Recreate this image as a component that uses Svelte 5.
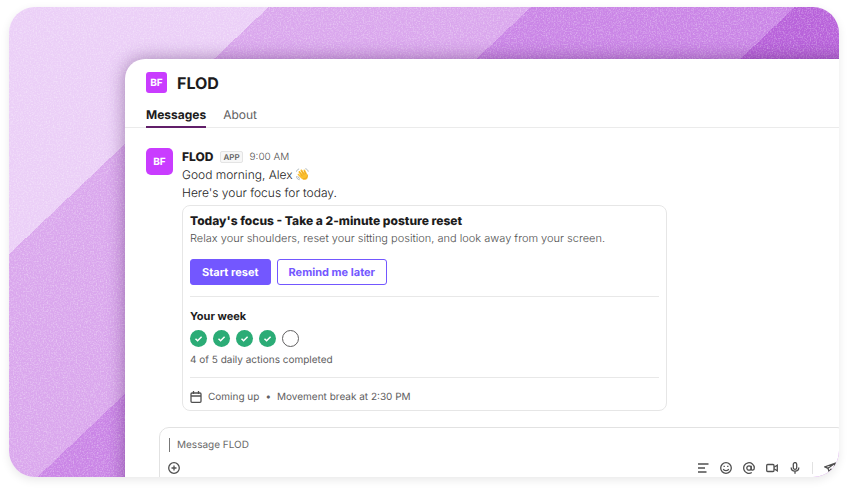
<script>
	let tab = $state('Messages');
	let message = $state('');

	const tabs = ['Messages', 'About'];
	const week = [true, true, true, true, false];
	const completed = week.filter(Boolean).length;
</script>

<div class="stage">
	<div class="frame">
		<svg class="grain" aria-hidden="true">
			<filter id="grain" x="0" y="0" width="100%" height="100%">
				<feTurbulence type="fractalNoise" baseFrequency="0.7" numOctaves="2" seed="4" />
				<feColorMatrix values="0 0 0 0 1  0 0 0 0 1  0 0 0 0 1  0.8 0 0 0 -0.34" />
			</filter>
			<rect width="100%" height="100%" filter="url(#grain)" />
		</svg>

		<main class="window">
			<header class="title">
				<span class="logo">BF</span>
				<h1>FLOD</h1>
			</header>

			<nav class="tabs">
				{#each tabs as name}
					<button class:active={tab === name} onclick={() => (tab = name)}>{name}</button>
				{/each}
			</nav>

			<article class="message">
				<span class="logo large">BF</span>
				<div class="body">
					<div class="meta">
						<strong>FLOD</strong>
						<span class="badge">APP</span>
						<time>9:00 AM</time>
					</div>
					<p>
						Good morning, Alex
						<svg class="wave" viewBox="0 0 24 24" role="img" aria-label="waving hand">
							<path
								d="M5 8 C4 6 6 4.500 7.500 6 L12 11 L8.500 5 C7.500 3 10 1.500 11.500 3.500 L16 9.500 L14 4.500 C13.500 2.500 16 2 17 4 L20 10 C23 15 22.500 19 19 21 C15.500 23 11.500 21.500 9 18.500 L3.500 13 C2 11 4 9.500 5.500 11 L9 14 Z"
								fill="#fbc02d"
							/>
							<path
								d="M5.500 8 L12 15 M9.500 5 L15 12.500 M15 5 L18 11 M21.500 12 C22 17 18 20.500 13 20"
								fill="none"
								stroke="#e59a1f"
								stroke-width="1.200"
							/>
							<path
								d="M1 16 C1 19 3 21 6 21.500 M3.500 16 C4 17.500 5 18.500 6.500 19 M18 1.500 C20.500 2 22 4 22.500 6 M1 6 C1.500 4 3 2.500 5 2"
								fill="none"
								stroke="#9aa5ad"
								stroke-width="1.500"
								stroke-linecap="round"
							/>
						</svg>
					</p>
					<p>Here's your focus for today.</p>

					<section class="card">
						<h2>Today's focus - Take a 2-minute posture reset</h2>
						<p class="desc">
							Relax your shoulders, reset your sitting position, and look away from your screen.
						</p>
						<div class="actions">
							<button class="primary">Start reset</button>
							<button class="secondary">Remind me later</button>
						</div>
						<hr />
						<h3>Your week</h3>
						<div class="week">
							{#each week as done}
								<span class="day" class:done>
									{#if done}
										<svg viewBox="0 0 17 17" aria-hidden="true">
											<path d="M5.500 8.700 L7.600 10.700 L11.600 6.700" />
										</svg>
									{/if}
								</span>
							{/each}
						</div>
						<p class="small">{completed} of {week.length} daily actions completed</p>
						<hr />
						<div class="upcoming">
							<svg class="icon" viewBox="0 0 12 12" aria-hidden="true">
								<rect x="1" y="2" width="10" height="9.300" rx="1" />
								<path d="M1 5 H11 M3.500 0 V3 M8.500 0 V3" />
							</svg>
							<span>Coming up</span>
							<span>•</span>
							<span>Movement break at 2:30 PM</span>
						</div>
					</section>
				</div>
			</article>

			<form class="composer" onsubmit={(e) => e.preventDefault()}>
				<input type="text" placeholder="Message FLOD" aria-label="Message FLOD" bind:value={message} />
				<div class="tools">
					<button type="button" class="add" aria-label="Attach">
						<svg class="icon" viewBox="0 0 12 12">
							<circle cx="6" cy="6" r="5.300" />
							<path d="M6 3.500 V8.500 M3.500 6 H8.500" />
						</svg>
					</button>
					<button type="button" aria-label="Formatting">
						<svg class="icon" viewBox="0 0 12 12">
							<path d="M1 2 H11.500 M1 6 H8 M1 10 H9.500" />
						</svg>
					</button>
					<button type="button" aria-label="Emoji">
						<svg class="icon" viewBox="0 0 12 12">
							<circle cx="6" cy="6" r="5.300" />
							<path d="M3.300 7 C4 9.200 8 9.200 8.700 7 M4.200 3.800 V5 M7.800 3.800 V5" />
						</svg>
					</button>
					<button type="button" aria-label="Mention">
						<svg class="icon" viewBox="0 0 12 12">
							<circle cx="6" cy="6" r="2.200" />
							<path
								d="M8.200 3.800 V6.800 C8.200 8.800 11.300 8.600 11.300 6 A5.300 5.300 0 1 0 8.800 10.500"
							/>
						</svg>
					</button>
					<button type="button" aria-label="Record video">
						<svg class="icon" viewBox="0 0 12 12">
							<rect x="0.700" y="2.500" width="7.300" height="7" rx="1" />
							<path d="M8 5.200 L11.300 3.200 V8.800 L8 6.800" />
						</svg>
					</button>
					<button type="button" aria-label="Record audio">
						<svg class="icon" viewBox="0 0 12 12">
							<rect x="4.300" y="0.600" width="3.400" height="6.800" rx="1.700" />
							<path d="M2.200 5.500 C2.200 10.400 9.800 10.400 9.800 5.500 M6 9.200 V11.800" />
						</svg>
					</button>
					<span class="sep"></span>
					<button type="submit" aria-label="Send">
						<svg class="icon" viewBox="0 0 12 12">
							<path d="M11.500 1 L0.800 4.800 L4 6.300 L5 9.500 L7 7.200 L9.500 8 Z M4 6.300 L11.500 1" />
						</svg>
					</button>
				</div>
			</form>
		</main>
	</div>
</div>

<style>
	:global(body) {
		background: #fff;
	}

	.stage {
		box-sizing: border-box;
		height: 100vh;
		padding: 7px 10px 12px 9px;
		display: flex;
		font-family: Inter, 'Liberation Sans', sans-serif;
		text-rendering: geometricPrecision;
		color: #1d1c1d;
	}

	.frame {
		flex: 1;
		min-width: 0;
		position: relative;
		overflow: hidden;
		border-radius: 26px;
		background: linear-gradient(
			136.4deg,
			#ebcff7 179px,
			#daa7ed 179px 360px,
			#ca85e6 360px 542px,
			#b862da 542px
		);
		box-shadow: 0 3px 10px rgba(0, 0, 0, 0.09);
	}

	.grain {
		position: absolute;
		inset: 0;
		width: 100%;
		height: 100%;
	}

	/* runs past the right and bottom edges of the frame */
	.window {
		position: relative;
		margin: 52px -30px 0 116px;
		min-height: 100%;
		background: #fff;
		border-radius: 20px 0 0 0;
		box-shadow: 0 0 18px rgba(50, 10, 70, 0.4);
	}

	h1,
	h2,
	h3,
	p {
		margin: 0;
	}

	button {
		font-family: inherit;
		text-rendering: inherit;
		cursor: pointer;
	}

	.logo {
		display: flex;
		align-items: center;
		justify-content: center;
		width: 21px;
		height: 21px;
		border-radius: 3px;
		background: #c93cff;
		color: #fff;
		font-size: 10px;
		font-weight: 700;
	}

	.logo.large {
		width: 27px;
		height: 27px;
		border-radius: 5px;
		flex: none;
	}

	.title {
		display: flex;
		align-items: center;
		gap: 10px;
		padding: 13px 21px 0;
	}

	h1 {
		font-size: 16px;
		line-height: 20px;
		font-weight: 700;
	}

	.tabs {
		display: flex;
		gap: 17px;
		padding: 13px 21px 0;
		box-shadow: inset 0 -1px #ebebeb;
	}

	.tabs button {
		padding: 0 0 2px;
		border: 0;
		border-bottom: 2px solid transparent;
		background: none;
		color: #616061;
		font-size: 12px;
		line-height: 18px;
	}

	.tabs .active {
		border-color: #611f69;
		color: #1d1c1d;
		font-weight: 700;
	}

	.message {
		display: flex;
		gap: 9px;
		padding: 20px 202px 0 21px;
	}

	.body {
		flex: 1;
		font-size: 12px;
		line-height: 18px;
	}

	.body p {
		font-weight: 300;
	}

	.meta {
		display: flex;
		align-items: center;
		gap: 7px;
	}

	.meta strong {
		font-weight: 800;
	}

	.badge {
		padding: 0 2px;
		border: 1px solid #e4e4e4;
		border-radius: 2px;
		background: #f7f7f7;
		color: #616061;
		font-size: 8px;
		line-height: 10px;
		font-weight: 600;
	}

	time {
		color: #505050;
		font-size: 10px;
		font-weight: 300;
	}

	.wave {
		width: 13px;
		height: 13px;
		vertical-align: -2px;
	}

	.card {
		margin-top: 3px;
		padding: 7px 7px 5px;
		border: 1px solid #e6e6e6;
		border-radius: 8px;
	}

	h2 {
		font-size: 12px;
		line-height: 16px;
		font-weight: 800;
	}

	.desc {
		color: #505050;
		font-size: 11px;
	}

	.actions {
		display: flex;
		gap: 6px;
		margin-top: 12px;
	}

	.actions button {
		height: 26px;
		padding: 0 11px;
		border: 1px solid #7357ff;
		border-radius: 3px;
		font-size: 11px;
		font-weight: 700;
	}

	.primary {
		background: #7357ff;
		color: #fff;
	}

	.secondary {
		background: #fff;
		color: #7357ff;
	}

	hr {
		margin: 11px 0;
		border: 0;
		border-top: 1px solid #e8e8e8;
	}

	h3 {
		font-size: 11px;
		line-height: 16px;
		font-weight: 700;
	}

	.week {
		display: flex;
		gap: 6px;
		margin: 6px 0 5px;
	}

	.day {
		box-sizing: border-box;
		width: 17px;
		height: 17px;
		border: 1px solid #616061;
		border-radius: 50%;
	}

	.day.done {
		border: 0;
		background: #2bac76;
	}

	.day svg {
		display: block;
		fill: none;
		stroke: #fff;
		stroke-width: 1.5;
	}

	.body .small {
		margin-bottom: 9px;
		color: #616061;
		font-size: 10px;
		font-weight: 400;
		line-height: 16px;
	}

	.small + hr {
		margin-top: 0;
	}

	.upcoming {
		display: flex;
		align-items: center;
		gap: 6px;
		color: #616061;
		font-size: 10px;
		line-height: 16px;
	}

	.icon {
		display: block;
		width: 12px;
		height: 12px;
		fill: none;
		stroke: #505050;
		stroke-width: 1.3;
	}

	.composer {
		margin: 16px 22px 0 34px;
		padding: 10px 9px 20px;
		border: 1px solid #e2e2e2;
		border-radius: 10px;
	}

	.composer input {
		box-sizing: border-box;
		display: block;
		width: 100%;
		height: 14px;
		padding: 0 0 0 7px;
		border: 0;
		border-left: 1px solid #777;
		outline: 0;
		background: none;
		font-family: inherit;
		font-size: 10px;
		text-rendering: inherit;
	}

	.composer input::placeholder {
		color: #696969;
		opacity: 1;
	}

	.tools {
		display: flex;
		align-items: center;
		gap: 11px;
		margin: 10px 1px 0 -1px;
	}

	.tools button {
		padding: 0;
		border: 0;
		background: none;
	}

	.tools .add {
		margin-right: auto;
	}

	.sep {
		width: 1px;
		height: 12px;
		background: #e2e2e2;
	}
</style>
